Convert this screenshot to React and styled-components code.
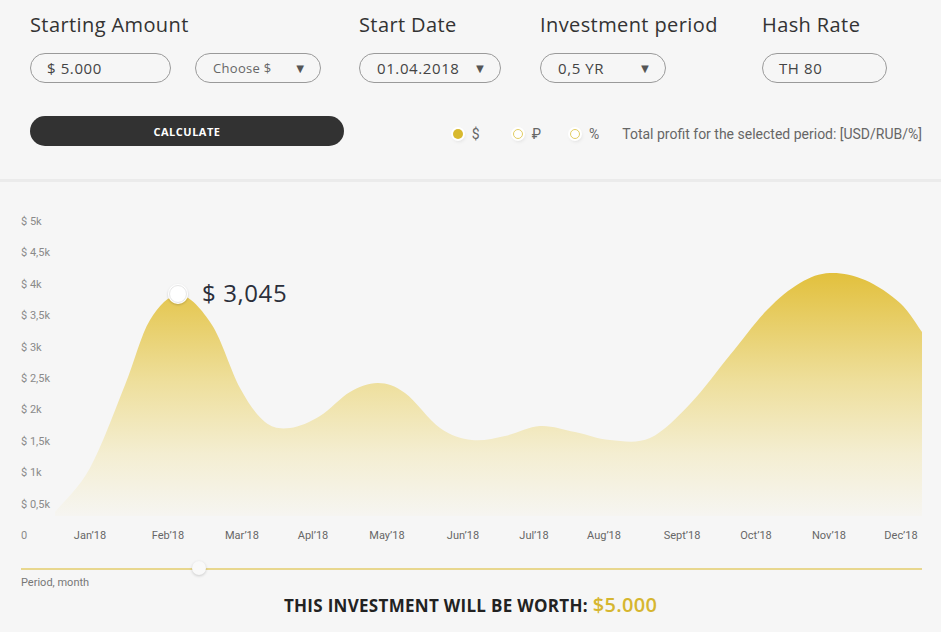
import React from 'react';
import styled, { createGlobalStyle } from 'styled-components';

const GlobalStyle = createGlobalStyle`
    html, body {
        margin: 0;
        padding: 0;
        background: #f6f6f6;
    }
    body {
        font-family: "Open Sans", "Liberation Sans", sans-serif;
        color: #333;
    }
`;

const Page = styled.div`
    width: 941px;
    height: 632px;
    overflow: hidden;
    background: #f6f6f6;
`;

const Header = styled.div`
    height: 182px;
    box-sizing: border-box;
    padding: 14px 19px 0 30px;
    border-bottom: 3px solid #ebebeb;
`;

const Fields = styled.div`
    display: grid;
    grid-template-columns: 329px 181px 222px auto;
`;

const Field = styled.div`
    display: flex;
    flex-direction: column;
`;

const Label = styled.div`
    font-size: 20px;
    line-height: 22px;
    color: #333;
    letter-spacing: 0.4px;
`;

const Inputs = styled.div`
    display: flex;
    gap: 24px;
    margin-top: 17px;
`;

const Pill = styled.div`
    display: flex;
    align-items: center;
    justify-content: space-between;
    box-sizing: border-box;
    width: ${p => p.$w}px;
    height: 30px;
    padding: 0 ${p => (p.$select ? 13 : 12)}px 0 ${p => (p.$select ? 17 : 16)}px;
    border: 1px solid #9a9a9a;
    border-radius: 15px;
    font-size: ${p => (p.$small ? 13 : 15)}px;
    color: ${p => (p.$small ? '#666' : '#444')};
    letter-spacing: ${p => (p.$small ? 0.3 : 0.6)}px;
`;

const Arrow = styled.span`
    font-size: 13px;
    color: #555;
`;

const ActionRow = styled.div`
    display: flex;
    align-items: center;
    justify-content: space-between;
    margin-top: 33px;
`;

const CalcButton = styled.button`
    width: 314px;
    height: 30px;
    border: none;
    border-radius: 15px;
    background: #323232;
    color: #fff;
    font-family: "Open Sans", "Liberation Sans", sans-serif;
    font-weight: 700;
    font-size: 11px;
    letter-spacing: 0.5px;
    cursor: pointer;
`;

const Legend = styled.div`
    display: flex;
    align-items: center;
    margin-top: 6px;
    font-family: Roboto, "Liberation Sans", sans-serif;
    font-size: 14px;
    color: #666;
`;

const LegendItem = styled.div`
    display: flex;
    align-items: center;
    gap: 9px;
    margin-right: ${p => p.$gap}px;
`;

const Dot = styled.span`
    width: ${p => (p.$filled ? 10 : 10)}px;
    height: ${p => (p.$filled ? 10 : 10)}px;
    box-sizing: border-box;
    border-radius: 50%;
    background: ${p => (p.$filled ? '#d8b92e' : '#fff')};
    border: ${p => (p.$filled ? '0' : '1.5px solid #e2cd63')};
    box-shadow: 0 0 0 2px #fff, 1px 2px 4px rgba(0, 0, 0, 0.15);
`;

const ChartWrap = styled.div`
    height: 366px;
`;

const SliderRow = styled.div`
    position: relative;
    margin: 20px 19px 0 21px;
    height: 2px;
    background: #e8d78e;
`;

const Thumb = styled.span`
    position: absolute;
    left: 171px;
    top: -7px;
    width: 14px;
    height: 14px;
    border-radius: 50%;
    background: #f9f9f9;
    box-shadow: 0 1px 3px rgba(0, 0, 0, 0.18);
`;

const PeriodLabel = styled.div`
    margin: 6px 0 0 21px;
    font-family: Roboto, "Liberation Sans", sans-serif;
    font-size: 11px;
    color: #777;
`;

const Result = styled.div`
    margin-top: 2px;
    text-align: center;
    font-size: 17px;
    font-weight: 700;
    color: #222;
    letter-spacing: 0.3px;
`;

const Worth = styled.span`
    font-size: 20px;
    font-weight: 600;
    color: #d6b630;
`;

const curve = [
    [55, 512], [90, 468], [125, 385], [150, 320], [180, 295], [212, 325],
    [240, 388], [265, 422], [290, 428], [320, 416], [350, 392], [378, 383],
    [405, 393], [440, 428], [472, 440], [505, 436], [540, 426], [575, 432],
    [610, 440], [650, 438], [690, 404], [730, 355], [767, 310], [800, 283],
    [830, 273], [865, 280], [900, 303], [922, 332],
];

function smoothPath(pts) {
    let d = `M${pts[0][0]},${pts[0][1]}`;
    for (let i = 0; i < pts.length - 1; i++) {
        const p0 = pts[i - 1] || pts[i];
        const p1 = pts[i];
        const p2 = pts[i + 1];
        const p3 = pts[i + 2] || p2;
        const c1x = p1[0] + (p2[0] - p0[0]) / 6;
        const c1y = p1[1] + (p2[1] - p0[1]) / 6;
        const c2x = p2[0] - (p3[0] - p1[0]) / 6;
        const c2y = p2[1] - (p3[1] - p1[1]) / 6;
        d += ` C${c1x},${c1y} ${c2x},${c2y} ${p2[0]},${p2[1]}`;
    }
    return d;
}

const yTicks = ['$ 5k', '$ 4,5k', '$ 4k', '$ 3,5k', '$ 3k', '$ 2,5k', '$ 2k', '$ 1,5k', '$ 1k', '$ 0,5k'];
const months = [
    ['Jan’18', 90], ['Feb’18', 168], ['Mar’18', 242], ['Apl’18', 313],
    ['May’18', 387], ['Jun’18', 463], ['Jul’18', 534], ['Aug’18', 604],
    ['Sept’18', 682], ['Oct’18', 756], ['Nov’18', 829], ['Dec’18', 901],
];

function Chart() {
    const line = smoothPath(curve);
    const area = `${line} L922,516 L55,516 Z`;
    return (
        <svg width="941" height="366" viewBox="0 182 941 366">
            <defs>
                <linearGradient id="gold" gradientUnits="userSpaceOnUse" x1="0" y1="272" x2="0" y2="516">
                    <stop offset="0" stopColor="#e2c03c" />
                    <stop offset="0.45" stopColor="#eedf9c" />
                    <stop offset="0.75" stopColor="#f4eed2" />
                    <stop offset="1" stopColor="#f6f5f1" />
                </linearGradient>
                <filter id="soft" x="-50%" y="-50%" width="200%" height="200%">
                    <feDropShadow dx="0" dy="1" stdDeviation="1" floodOpacity="0.2" />
                </filter>
            </defs>
            <path d={area} fill="url(#gold)" />
            <g fontFamily="Roboto, 'Liberation Sans', sans-serif" fontSize="11" fill="#8a8a8a">
                {yTicks.map((t, i) => (
                    <text key={t} x="21" y={225 + i * 31.4}>{t}</text>
                ))}
                <text x="21" y="539">0</text>
            </g>
            <g fontFamily="Roboto, 'Liberation Sans', sans-serif" fontSize="11" fill="#666" textAnchor="middle">
                {months.map(([m, x]) => (
                    <text key={m} x={x} y="539">{m}</text>
                ))}
            </g>
            <circle cx="178" cy="294" r="10" fill="#fff" filter="url(#soft)" />
            <circle cx="178" cy="294" r="8.5" fill="none" stroke="#e6e6e6" strokeWidth="1" />
            <circle cx="178" cy="294" r="7" fill="#fff" />
            <text x="202" y="302" fontFamily="'Open Sans', 'Liberation Sans', sans-serif" fontSize="24" letterSpacing="0.6" fill="#2b2f3a">
                $ 3,045
            </text>
        </svg>
    );
}

export default function App() {
    return (
        <Page>
            <GlobalStyle />
            <Header>
                <Fields>
                    <Field>
                        <Label>Starting Amount</Label>
                        <Inputs>
                            <Pill $w={141}>$ 5.000</Pill>
                            <Pill $w={126} $select $small>
                                Choose $<Arrow>▼</Arrow>
                            </Pill>
                        </Inputs>
                    </Field>
                    <Field>
                        <Label>Start Date</Label>
                        <Inputs>
                            <Pill $w={142} $select>
                                01.04.2018<Arrow>▼</Arrow>
                            </Pill>
                        </Inputs>
                    </Field>
                    <Field>
                        <Label>Investment period</Label>
                        <Inputs>
                            <Pill $w={126} $select>
                                0,5 YR<Arrow>▼</Arrow>
                            </Pill>
                        </Inputs>
                    </Field>
                    <Field>
                        <Label>Hash Rate</Label>
                        <Inputs>
                            <Pill $w={125}>TH 80</Pill>
                        </Inputs>
                    </Field>
                </Fields>
                <ActionRow>
                    <CalcButton>CALCULATE</CalcButton>
                    <Legend>
                        <LegendItem $gap={33}><Dot $filled />$</LegendItem>
                        <LegendItem $gap={29}><Dot />₽</LegendItem>
                        <LegendItem $gap={23}><Dot />%</LegendItem>
                        <span>Total profit for the selected period: [USD/RUB/%]</span>
                    </Legend>
                </ActionRow>
            </Header>
            <ChartWrap>
                <Chart />
            </ChartWrap>
            <SliderRow>
                <Thumb />
            </SliderRow>
            <PeriodLabel>Period, month</PeriodLabel>
            <Result>
                THIS INVESTMENT WILL BE WORTH: <Worth>$5.000</Worth>
            </Result>
        </Page>
    );
}
